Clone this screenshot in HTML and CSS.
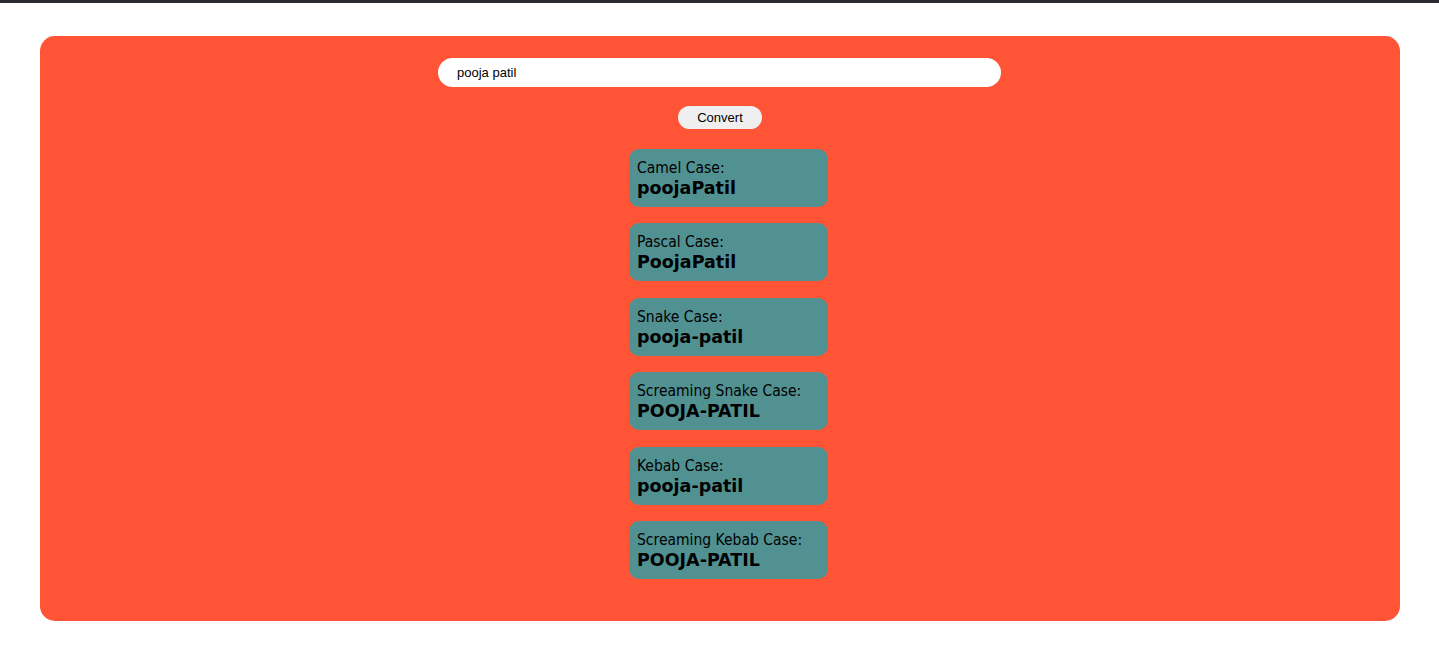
FILE: index.html
```html
<!DOCTYPE html>
<html lang="en">
<head>
<meta charset="utf-8">
<title>Case Converter</title>
<link rel="stylesheet" href="styles.css">
</head>
<body>
<div class="topbar"></div>
<main class="panel">
  <input class="text-input" type="text" value="pooja patil">
  <button class="convert-btn" type="button">Convert</button>
  <div class="results">
    <div class="card"><div class="label">Camel Case:</div><div class="value">poojaPatil</div></div>
    <div class="card"><div class="label">Pascal Case:</div><div class="value">PoojaPatil</div></div>
    <div class="card"><div class="label">Snake Case:</div><div class="value">pooja-patil</div></div>
    <div class="card"><div class="label">Screaming Snake Case:</div><div class="value">POOJA-PATIL</div></div>
    <div class="card"><div class="label">Kebab Case:</div><div class="value">pooja-patil</div></div>
    <div class="card"><div class="label">Screaming Kebab Case:</div><div class="value">POOJA-PATIL</div></div>
  </div>
</main>
</body>
</html>
```
FILE: styles.css
```css
html, body {
  margin: 0;
  padding: 0;
  background: #ffffff;
}
.topbar {
  height: 3px;
  background: #2b2c31;
}
.panel {
  box-sizing: border-box;
  margin: 33px 39px 0 40px;
  height: 585px;
  background: #ff5436;
  border-radius: 15px;
  padding-top: 22px;
  display: flex;
  flex-direction: column;
  align-items: center;
}
.text-input {
  box-sizing: border-box;
  width: 563px;
  height: 29px;
  border: none;
  outline: none;
  border-radius: 15px;
  background: #fff;
  padding: 0 19px;
  font-family: "Liberation Sans", Arial, sans-serif;
  font-size: 13px;
  color: #000;
  margin-left: -1px;
}
.convert-btn {
  box-sizing: border-box;
  margin-top: 19px;
  width: 84px;
  height: 23px;
  border: none;
  border-radius: 12px;
  background: #efefef;
  font-family: "Liberation Sans", Arial, sans-serif;
  font-size: 13px;
  color: #000;
  padding: 0;
}
.results {
  margin-top: 20px;
  display: flex;
  flex-direction: column;
  gap: 16.4px;
  margin-left: 17px;
}
.card {
  box-sizing: border-box;
  width: 199px;
  height: 58px;
  background: #519192;
  border-radius: 10px;
  padding: 10px 8px 0;
  color: #000;
}
.label {
  font-family: "DejaVu Sans Condensed", "DejaVu Sans", sans-serif;
  font-size: 15.5px;
  line-height: 19px;
}
.value {
  font-family: "DejaVu Sans", sans-serif;
  font-size: 17.5px;
  font-weight: bold;
  line-height: 21px;
}
```
